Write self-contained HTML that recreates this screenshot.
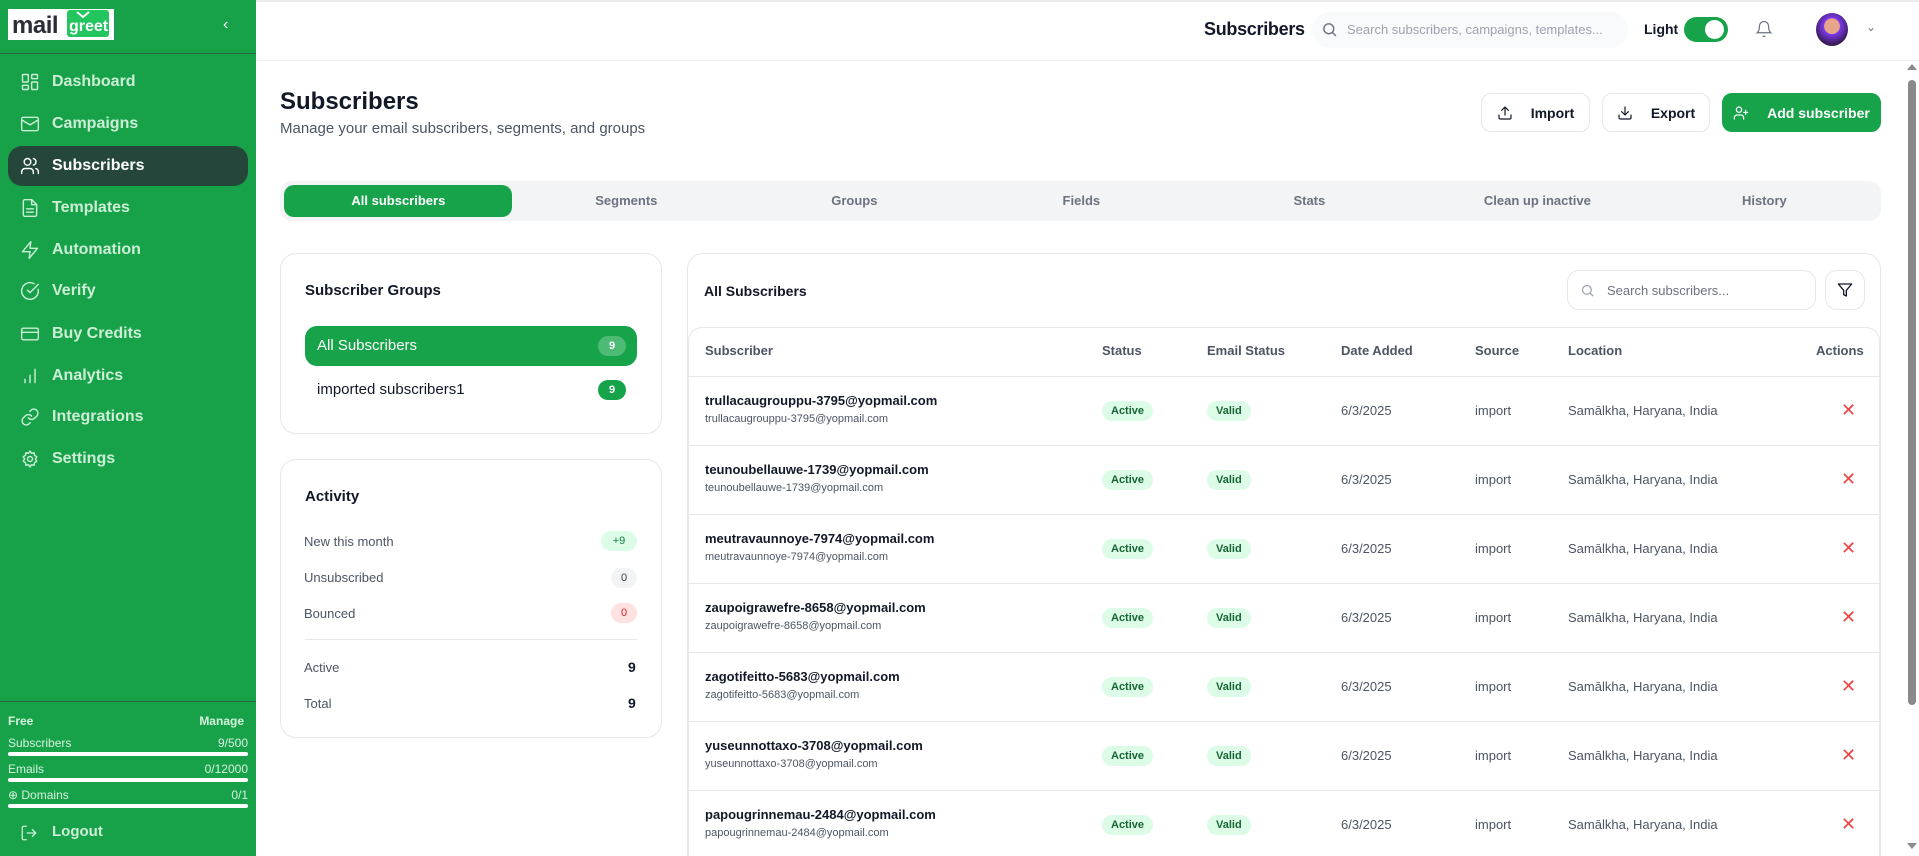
<!DOCTYPE html>
<html style="overflow:hidden;width:1919px;height:856px"><head><meta charset="utf-8">
<style>
*{box-sizing:border-box;margin:0;padding:0}
body{width:1919px;height:856px;overflow:hidden;font-family:"Liberation Sans",sans-serif;background:#fff;position:relative;color:#111827}
.a{position:absolute}
#sb{left:0;top:0;width:256px;height:856px;background:#17a24a}
.nav{position:absolute;left:8px;width:240px;height:40px;border-radius:14px;color:#cdeed6;font-weight:bold;font-size:16px;display:flex;align-items:center;padding-left:12px}
.nav svg{width:20px;height:20px;margin-right:12px;stroke:#cdeed6;fill:none;stroke-width:1.7;stroke-linecap:round;stroke-linejoin:round}
.nav.act{background:#25463a;color:#fff}
.nav.act svg{stroke:#fff}
.sm{font-size:12px;color:#d6f2dd}
.bar{position:absolute;left:8px;width:240px;height:4px;background:#fff;border-radius:2px}
.btn{position:absolute;top:93px;height:39px;border:1px solid #e5e7eb;border-radius:10px;background:#fff;display:flex;align-items:center;justify-content:center;font-weight:bold;font-size:14px;color:#111827}
.btn svg{width:16px;height:16px;margin-right:18px;stroke:#111827;fill:none;stroke-width:1.8;stroke-linecap:round;stroke-linejoin:round}
.tab{position:absolute;top:185px;height:32px;width:228.7px;text-align:center;line-height:32px;font-size:13px;font-weight:bold;color:#6b7280}
.card{position:absolute;border:1px solid #e5e7eb;border-radius:16px;background:#fff}
.lbl{position:absolute;left:304px;font-size:13px;color:#4b5563}
.pill{position:absolute;border-radius:10px;font-size:11px;text-align:center;line-height:20px;height:20px}
.th{position:absolute;top:343px;font-size:13px;font-weight:bold;color:#4b5563}
.row{position:absolute;left:688px;width:1192px;height:69px;border-top:1px solid #e5e7eb}
.row .e{position:absolute;left:17px;top:16px;font-size:13px;font-weight:bold;color:#111827}
.row .s{position:absolute;left:17px;top:36px;font-size:11px;color:#4b5563}
.row .b{position:absolute;top:24px;height:20px;line-height:20px;font-size:11px;font-weight:bold;color:#166534;background:#dcfce7;border-radius:10px;padding:0 9px}
.row .t{position:absolute;top:26px;font-size:13px;color:#4b5563}
.row .x{position:absolute;left:1153px;top:23px;color:#ef4444;font-size:18px}
</style></head><body>
<div id="sb" class="a">
 <div class="a" style="left:8px;top:9px;width:106px;height:31px;background:#fff"></div>
 <div class="a" style="left:12px;top:12px;font-size:24px;font-weight:bold;color:#2d2d3a;letter-spacing:-0.5px">mail</div>
 <div class="a" style="left:67px;top:10px;width:42px;height:27px;background:#22c55e;border-radius:3px"></div>
 <svg class="a" style="left:76px;top:11px" width="14" height="8"><path d="M1 1 L7 6 L13 1" stroke="#fff" stroke-width="2" fill="none"/></svg>
 <div class="a" style="left:69px;top:18px;font-size:16px;font-weight:bold;color:#fff">greet</div>
 <div class="a" style="left:223px;top:16px;color:#fff;font-size:16px">‹</div>
 <div class="a" style="left:0;top:53px;width:256px;height:1px;background:#2a6a40"></div>

 <div class="nav" style="top:62px"><svg viewBox="0 0 24 24"><rect x="3" y="3" width="7" height="9" rx="1"/><rect x="14" y="3" width="7" height="5" rx="1"/><rect x="14" y="12" width="7" height="9" rx="1"/><rect x="3" y="16" width="7" height="5" rx="1"/></svg>Dashboard</div>
 <div class="nav" style="top:104px"><svg viewBox="0 0 24 24"><rect x="2" y="4" width="20" height="16" rx="2"/><path d="M22 7l-10 6L2 7"/></svg>Campaigns</div>
 <div class="nav act" style="top:146px"><svg viewBox="0 0 24 24"><path d="M16 21v-2a4 4 0 0 0-4-4H6a4 4 0 0 0-4 4v2"/><circle cx="9" cy="7" r="4"/><path d="M22 21v-2a4 4 0 0 0-3-3.9M16 3.1a4 4 0 0 1 0 7.8"/></svg>Subscribers</div>
 <div class="nav" style="top:188px"><svg viewBox="0 0 24 24"><path d="M14 2H6a2 2 0 0 0-2 2v16a2 2 0 0 0 2 2h12a2 2 0 0 0 2-2V8z"/><path d="M14 2v6h6M16 13H8M16 17H8"/></svg>Templates</div>
 <div class="nav" style="top:230px"><svg viewBox="0 0 24 24"><path d="M13 2L3 14h9l-1 8 10-12h-9l1-8z"/></svg>Automation</div>
 <div class="nav" style="top:271px"><svg viewBox="0 0 24 24"><path d="M21.8 10A10 10 0 1 1 17 3.3"/><path d="M9 11l3 3L22 4"/></svg>Verify</div>
 <div class="nav" style="top:314px"><svg viewBox="0 0 24 24"><rect x="2" y="5" width="20" height="14" rx="2"/><path d="M2 10h20"/></svg>Buy Credits</div>
 <div class="nav" style="top:356px"><svg viewBox="0 0 24 24"><path d="M6 20v-4M12 20v-9M18 20V4"/></svg>Analytics</div>
 <div class="nav" style="top:397px"><svg viewBox="0 0 24 24"><path d="M10 13a5 5 0 0 0 7.5.5l3-3a5 5 0 0 0-7-7l-1.7 1.7"/><path d="M14 11a5 5 0 0 0-7.5-.5l-3 3a5 5 0 0 0 7 7l1.7-1.7"/></svg>Integrations</div>
 <div class="nav" style="top:439px"><svg viewBox="0 0 24 24"><circle cx="12" cy="12" r="3"/><path d="M12 2.5l1.8 2.6 3.1-.6.6 3.1 2.6 1.8-1.6 2.6 1.6 2.6-2.6 1.8-.6 3.1-3.1-.6L12 21.5l-1.8-2.6-3.1.6-.6-3.1-2.6-1.8L5.5 12 3.9 9.4l2.6-1.8.6-3.1 3.1.6z"/></svg>Settings</div>

 <div class="a" style="left:0;top:701px;width:256px;height:1px;background:#2a6a40"></div>
 <div class="a sm" style="left:8px;top:714px;font-weight:bold">Free</div>
 <div class="a sm" style="right:12px;top:714px;font-weight:bold">Manage</div>
 <div class="a sm" style="left:8px;top:736px">Subscribers</div><div class="a sm" style="right:8px;top:736px">9/500</div>
 <div class="bar" style="top:752px"></div>
 <div class="a sm" style="left:8px;top:762px">Emails</div><div class="a sm" style="right:8px;top:762px">0/12000</div>
 <div class="bar" style="top:778px"></div>
 <div class="a sm" style="left:8px;top:788px">⊕ Domains</div><div class="a sm" style="right:8px;top:788px">0/1</div>
 <div class="bar" style="top:804px"></div>
 <svg class="a" style="left:20px;top:824px" width="18" height="18" viewBox="0 0 24 24" fill="none" stroke="#cdeed6" stroke-width="1.7"><path d="M9 21H5a2 2 0 0 1-2-2V5a2 2 0 0 1 2-2h4M16 17l5-5-5-5M21 12H9"/></svg>
 <div class="a" style="left:52px;top:823px;color:#cdeed6;font-weight:bold;font-size:15px">Logout</div>
</div>

<!-- header -->
<div class="a" style="left:256px;top:0;width:1663px;height:2px;background:#ececec"></div>
<div class="a" style="left:256px;top:60px;width:1663px;height:1px;background:#eef0f2"></div>
<div class="a" style="left:1204px;top:19px;font-size:18px;font-weight:bold;letter-spacing:-0.3px">Subscribers</div>
<div class="a" style="left:1312px;top:12px;width:316px;height:36px;background:#f9fafb;border-radius:18px"></div>
<svg class="a" style="left:1321px;top:21px" width="17" height="17" viewBox="0 0 24 24" fill="none" stroke="#6b7280" stroke-width="2"><circle cx="11" cy="11" r="7"/><path d="M21 21l-5-5"/></svg>
<div class="a" style="left:1347px;top:22px;font-size:13px;color:#9ca3af">Search subscribers, campaigns, templates...</div>
<div class="a" style="left:1644px;top:21px;font-size:14px;font-weight:bold">Light</div>
<div class="a" style="left:1684px;top:17px;width:44px;height:25px;background:#16a34a;border-radius:13px"></div>
<div class="a" style="left:1705px;top:20px;width:19px;height:19px;background:#fff;border-radius:50%"></div>
<svg class="a" style="left:1755px;top:19px" width="18" height="20" viewBox="0 0 24 24" fill="none" stroke="#6b7280" stroke-width="1.6"><path d="M6 8a6 6 0 0 1 12 0c0 7 3 9 3 9H3s3-2 3-9M10.3 21a1.9 1.9 0 0 0 3.4 0"/></svg>
<div class="a" style="left:1816px;top:13px;width:32px;height:33px;border-radius:50%;background:radial-gradient(circle at 50% 40%,#e8a58a 0 30%,#7c3aed 32%,#3b1c5a 70%)"></div>
<div class="a" style="left:1866px;top:20px;color:#6b7280;font-size:12px">⌄</div>

<!-- title -->
<div class="a" style="left:280px;top:88px;font-size:24px;font-weight:bold">Subscribers</div>
<div class="a" style="left:280px;top:120px;font-size:15px;color:#4b5563">Manage your email subscribers, segments, and groups</div>
<div class="btn" style="left:1481px;width:109px"><svg viewBox="0 0 24 24"><path d="M21 15v4a2 2 0 0 1-2 2H5a2 2 0 0 1-2-2v-4M17 8l-5-5-5 5M12 3v12"/></svg>Import</div>
<div class="btn" style="left:1602px;width:108px"><svg viewBox="0 0 24 24"><path d="M21 15v4a2 2 0 0 1-2 2H5a2 2 0 0 1-2-2v-4M7 10l5 5 5-5M12 15V3"/></svg>Export</div>
<div class="btn" style="left:1722px;width:159px;background:#16a34a;border-color:#16a34a;color:#fff"><svg viewBox="0 0 24 24" style="stroke:#fff"><path d="M16 21v-2a4 4 0 0 0-4-4H6a4 4 0 0 0-4 4v2"/><circle cx="9" cy="7" r="4"/><path d="M19 8v6M22 11h-6"/></svg>Add subscriber</div>

<!-- tabs -->
<div class="a" style="left:280px;top:181px;width:1601px;height:40px;background:#f3f4f6;border-radius:12px"></div>
<div class="a" style="left:284px;top:185px;width:228px;height:32px;background:#16a34a;border-radius:10px"></div>
<div class="tab" style="left:284px;color:#fff">All subscribers</div>
<div class="tab" style="left:512px">Segments</div>
<div class="tab" style="left:740px">Groups</div>
<div class="tab" style="left:967px">Fields</div>
<div class="tab" style="left:1195px">Stats</div>
<div class="tab" style="left:1423px">Clean up inactive</div>
<div class="tab" style="left:1650px">History</div>

<!-- groups card -->
<div class="card" style="left:280px;top:253px;width:382px;height:181px"></div>
<div class="a" style="left:305px;top:282px;font-size:15px;font-weight:bold">Subscriber Groups</div>
<div class="a" style="left:305px;top:326px;width:332px;height:40px;background:#16a34a;border-radius:12px"></div>
<div class="a" style="left:317px;top:337px;font-size:15px;color:#fff">All Subscribers</div>
<div class="pill" style="left:598px;top:336px;width:28px;background:#4dbb73;color:#fff;font-weight:bold">9</div>
<div class="a" style="left:317px;top:381px;font-size:15px;color:#111827">imported subscribers1</div>
<div class="pill" style="left:598px;top:380px;width:28px;background:#16a34a;color:#fff;font-weight:bold">9</div>

<!-- activity card -->
<div class="card" style="left:280px;top:459px;width:382px;height:279px"></div>
<div class="a" style="left:305px;top:488px;font-size:15px;font-weight:bold">Activity</div>
<div class="lbl" style="top:534px">New this month</div>
<div class="pill" style="left:601px;top:531px;width:36px;background:#dcfce7;color:#15803d">+9</div>
<div class="lbl" style="top:570px">Unsubscribed</div>
<div class="pill" style="left:611px;top:568px;width:26px;background:#f3f4f6;color:#374151">0</div>
<div class="lbl" style="top:606px">Bounced</div>
<div class="pill" style="left:611px;top:603px;width:26px;background:#fee2e2;color:#dc2626">0</div>
<div class="a" style="left:305px;top:639px;width:332px;height:1px;background:#e5e7eb"></div>
<div class="lbl" style="top:660px">Active</div><div class="a" style="left:628px;top:659px;font-size:14px;font-weight:bold">9</div>
<div class="lbl" style="top:696px">Total</div><div class="a" style="left:628px;top:695px;font-size:14px;font-weight:bold">9</div>

<!-- table card -->
<div class="card" style="left:687px;top:253px;width:1194px;height:620px;border-bottom:none"></div>
<div class="a" style="left:704px;top:283px;font-size:14px;font-weight:bold">All Subscribers</div>
<div class="a" style="left:1567px;top:270px;width:249px;height:40px;border:1px solid #e5e7eb;border-radius:12px"></div>
<svg class="a" style="left:1580px;top:283px" width="15" height="15" viewBox="0 0 24 24" fill="none" stroke="#9ca3af" stroke-width="2"><circle cx="11" cy="11" r="7"/><path d="M21 21l-5-5"/></svg>
<div class="a" style="left:1607px;top:283px;font-size:13px;color:#6b7280">Search subscribers...</div>
<div class="a" style="left:1825px;top:270px;width:40px;height:40px;border:1px solid #e5e7eb;border-radius:12px"></div>
<svg class="a" style="left:1837px;top:282px" width="16" height="16" viewBox="0 0 24 24" fill="none" stroke="#111827" stroke-width="2" stroke-linejoin="round"><path d="M22 3H2l8 9.5V19l4 2v-8.5z"/></svg>
<div class="card" style="left:688px;top:327px;width:1192px;height:560px;border-radius:14px;border-bottom:none"></div>
<div class="th" style="left:705px">Subscriber</div>
<div class="th" style="left:1102px">Status</div>
<div class="th" style="left:1207px">Email Status</div>
<div class="th" style="left:1341px">Date Added</div>
<div class="th" style="left:1475px">Source</div>
<div class="th" style="left:1568px">Location</div>
<div class="th" style="left:1816px">Actions</div>

<div class="row" style="top:376px"><div class="e">trullacaugrouppu-3795@yopmail.com</div><div class="s">trullacaugrouppu-3795@yopmail.com</div><div class="b" style="left:414px">Active</div><div class="b" style="left:519px">Valid</div><div class="t" style="left:653px">6/3/2025</div><div class="t" style="left:787px">import</div><div class="t" style="left:880px">Samālkha, Haryana, India</div><div class="x">✕</div></div>
<div class="row" style="top:445px"><div class="e">teunoubellauwe-1739@yopmail.com</div><div class="s">teunoubellauwe-1739@yopmail.com</div><div class="b" style="left:414px">Active</div><div class="b" style="left:519px">Valid</div><div class="t" style="left:653px">6/3/2025</div><div class="t" style="left:787px">import</div><div class="t" style="left:880px">Samālkha, Haryana, India</div><div class="x">✕</div></div>
<div class="row" style="top:514px"><div class="e">meutravaunnoye-7974@yopmail.com</div><div class="s">meutravaunnoye-7974@yopmail.com</div><div class="b" style="left:414px">Active</div><div class="b" style="left:519px">Valid</div><div class="t" style="left:653px">6/3/2025</div><div class="t" style="left:787px">import</div><div class="t" style="left:880px">Samālkha, Haryana, India</div><div class="x">✕</div></div>
<div class="row" style="top:583px"><div class="e">zaupoigrawefre-8658@yopmail.com</div><div class="s">zaupoigrawefre-8658@yopmail.com</div><div class="b" style="left:414px">Active</div><div class="b" style="left:519px">Valid</div><div class="t" style="left:653px">6/3/2025</div><div class="t" style="left:787px">import</div><div class="t" style="left:880px">Samālkha, Haryana, India</div><div class="x">✕</div></div>
<div class="row" style="top:652px"><div class="e">zagotifeitto-5683@yopmail.com</div><div class="s">zagotifeitto-5683@yopmail.com</div><div class="b" style="left:414px">Active</div><div class="b" style="left:519px">Valid</div><div class="t" style="left:653px">6/3/2025</div><div class="t" style="left:787px">import</div><div class="t" style="left:880px">Samālkha, Haryana, India</div><div class="x">✕</div></div>
<div class="row" style="top:721px"><div class="e">yuseunnottaxo-3708@yopmail.com</div><div class="s">yuseunnottaxo-3708@yopmail.com</div><div class="b" style="left:414px">Active</div><div class="b" style="left:519px">Valid</div><div class="t" style="left:653px">6/3/2025</div><div class="t" style="left:787px">import</div><div class="t" style="left:880px">Samālkha, Haryana, India</div><div class="x">✕</div></div>
<div class="row" style="top:790px;height:66px"><div class="e">papougrinnemau-2484@yopmail.com</div><div class="s">papougrinnemau-2484@yopmail.com</div><div class="b" style="left:414px">Active</div><div class="b" style="left:519px">Valid</div><div class="t" style="left:653px">6/3/2025</div><div class="t" style="left:787px">import</div><div class="t" style="left:880px">Samālkha, Haryana, India</div><div class="x">✕</div></div>

<!-- scrollbar -->
<div class="a" style="left:1904px;top:61px;width:15px;height:795px;background:#fff"></div>
<div class="a" style="left:1908px;top:80px;width:8px;height:625px;background:#8a8a8a;border-radius:4px"></div>
<div class="a" style="left:1907px;top:64px;width:0;height:0;border-left:5px solid transparent;border-right:5px solid transparent;border-bottom:6px solid #8a8a8a"></div>
<div class="a" style="left:1907px;top:843px;width:0;height:0;border-left:5px solid transparent;border-right:5px solid transparent;border-top:6px solid #8a8a8a"></div>
</body></html>
